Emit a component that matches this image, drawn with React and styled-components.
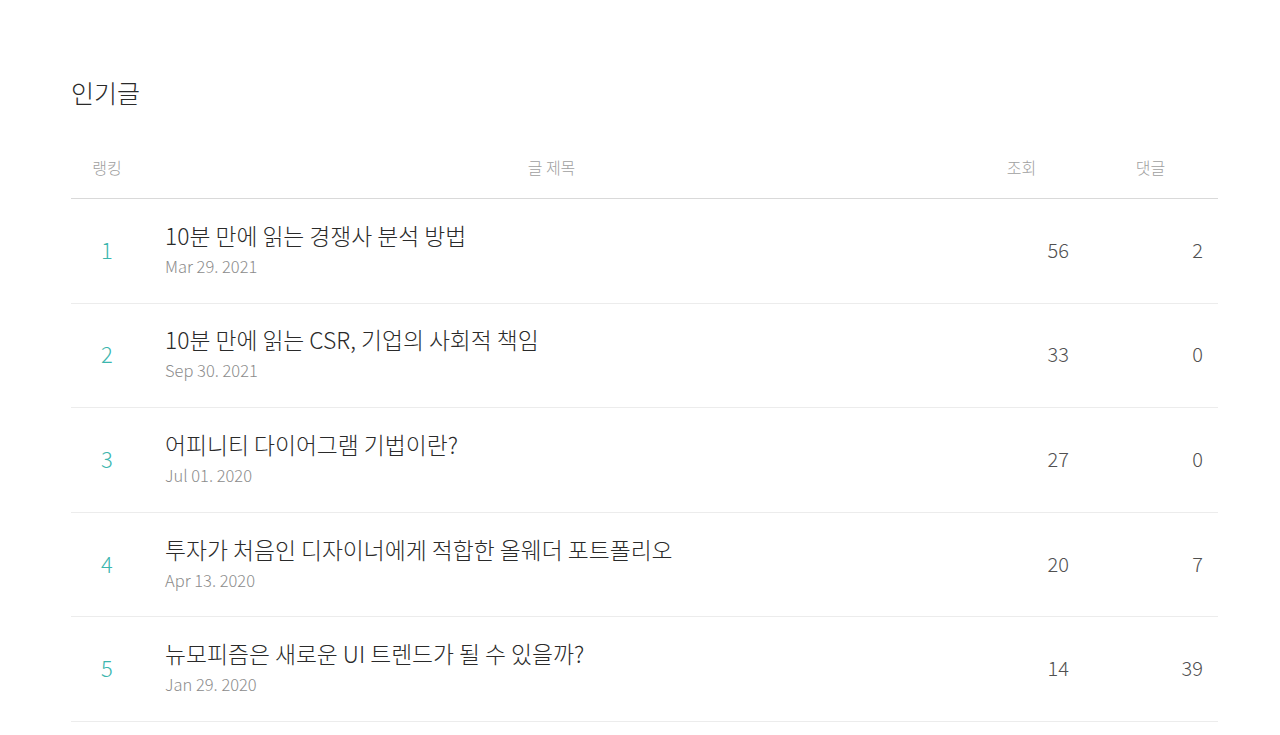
import React from "react";
import styled, { createGlobalStyle } from "styled-components";

const GlobalStyle = createGlobalStyle`
  body {
    margin: 0;
    background: #fff;
    font-family: "Noto Sans CJK KR", "Noto Sans", sans-serif;
    font-weight: 300;
    color: #222;
  }
`;

const Page = styled.div`
  padding: 72px 62px 0 71px;
`;

const Heading = styled.h2`
  margin: 0;
  font-size: 25px;
  font-weight: 300;
  line-height: 40px;
  color: #2a2a2a;
`;

const Table = styled.div`
  margin-top: 24px;
  display: grid;
  grid-template-columns: 72px 1fr 123px 135px;
`;

const HeadCell = styled.div`
  height: 62px;
  display: flex;
  align-items: center;
  justify-content: center;
  font-size: 16px;
  color: #a0a0a0;
  border-bottom: 1px solid #d9d9d9;
`;

const Cell = styled.div`
  height: 103.6px;
  display: flex;
  align-items: center;
  border-bottom: 1px solid #ececec;
  justify-content: ${({ $align }) => $align || "flex-start"};
  padding-right: ${({ $pr }) => $pr || 0}px;
  padding-left: ${({ $pl }) => $pl || 0}px;
`;

const Rank = styled.span`
  font-size: 22px;
  color: #3cb6ae;
  margin-top: -4px;
`;

const TitleBox = styled.div`
  display: flex;
  flex-direction: column;
  margin-top: -5px;
`;

const Title = styled.div`
  font-size: 22.8px;
  line-height: 34px;
  color: #2a2a2a;
`;

const Date = styled.div`
  font-size: 16.5px;
  line-height: 24px;
  margin-top: 1px;
  color: #8c8c8c;
`;

const Num = styled.span`
  font-size: 20px;
  color: #505050;
  margin-top: -3px;
`;

const posts = [
  { title: "10분 만에 읽는 경쟁사 분석 방법", date: "Mar 29. 2021", views: 56, comments: 2 },
  { title: "10분 만에 읽는 CSR, 기업의 사회적 책임", date: "Sep 30. 2021", views: 33, comments: 0 },
  { title: "어피니티 다이어그램 기법이란?", date: "Jul 01. 2020", views: 27, comments: 0 },
  { title: "투자가 처음인 디자이너에게 적합한 올웨더 포트폴리오", date: "Apr 13. 2020", views: 20, comments: 7 },
  { title: "뉴모피즘은 새로운 UI 트렌드가 될 수 있을까?", date: "Jan 29. 2020", views: 14, comments: 39 },
];

export default function App() {
  return (
    <>
      <GlobalStyle />
      <Page>
        <Heading>인기글</Heading>
        <Table>
          <HeadCell>랭킹</HeadCell>
          <HeadCell>글 제목</HeadCell>
          <HeadCell>조회</HeadCell>
          <HeadCell>댓글</HeadCell>
          {posts.map((p, i) => (
            <React.Fragment key={i}>
              <Cell $align="center">
                <Rank>{i + 1}</Rank>
              </Cell>
              <Cell $pl={22}>
                <TitleBox>
                  <Title>{p.title}</Title>
                  <Date>{p.date}</Date>
                </TitleBox>
              </Cell>
              <Cell $align="flex-end" $pr={14}>
                <Num>{p.views}</Num>
              </Cell>
              <Cell $align="flex-end" $pr={15}>
                <Num>{p.comments}</Num>
              </Cell>
            </React.Fragment>
          ))}
        </Table>
      </Page>
    </>
  );
}
